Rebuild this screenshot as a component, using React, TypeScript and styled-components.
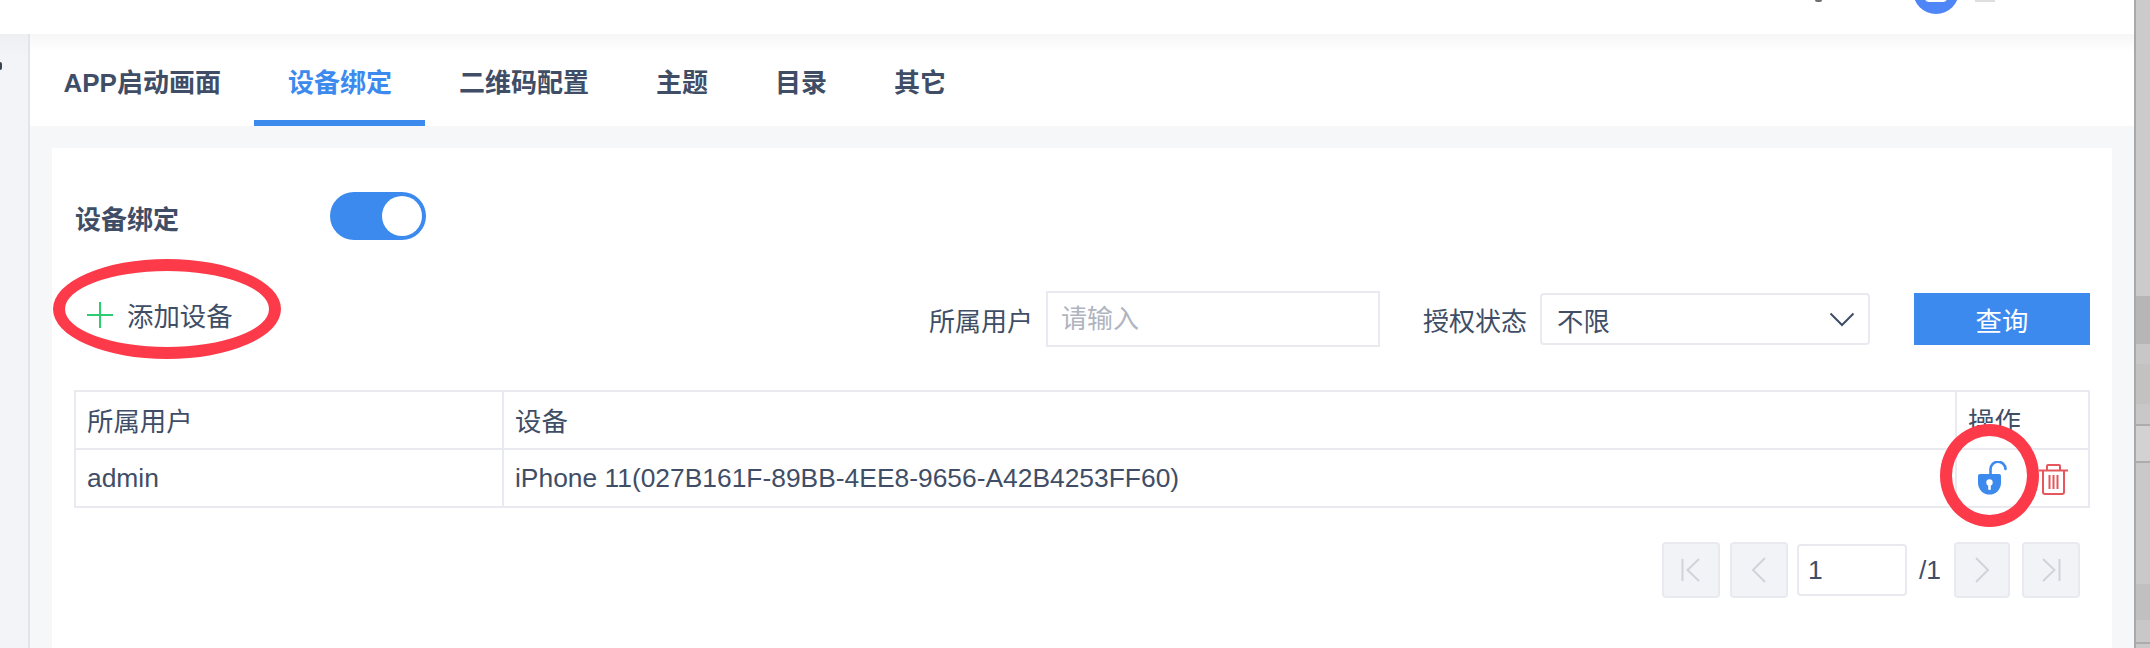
import styled, { createGlobalStyle } from 'styled-components';

const GlobalStyle = createGlobalStyle`
  html, body {
    margin: 0;
    padding: 0;
    background: #fff;
  }
  * {
    box-sizing: border-box;
  }
`;

const Page = styled.div`
  display: flex;
  width: 2150px;
  height: 648px;
  overflow: hidden;
  font-family: "Liberation Sans", "Noto Sans CJK SC", sans-serif;
  font-size: 26.4px;
  color: #3f4e66;
`;

const Main = styled.div`
  display: flex;
  flex-direction: column;
  width: 2134px;
`;

const Header = styled.header`
  display: flex;
  justify-content: flex-end;
  align-items: flex-start;
  flex: none;
  height: 34px;
  padding-right: 139px;
  background: #fff;
  overflow: hidden;
`;

const HeaderIconTip = styled.span`
  width: 7px;
  height: 2px;
  margin-right: 91px;
  border-radius: 0 0 4px 4px;
  background: #6f6f6f;
`;

const Avatar = styled.span`
  display: flex;
  justify-content: center;
  align-items: flex-end;
  width: 46px;
  height: 46px;
  margin-top: -32px;
  padding-bottom: 12px;
  border-radius: 50%;
  background: #4f86f7;

  &::before {
    content: '';
    width: 22px;
    height: 8px;
    border-radius: 0 0 4px 4px;
    background: #fff;
  }
`;

const HeaderNameTip = styled.span`
  width: 20px;
  height: 2px;
  margin-left: 16px;
  background: #dedede;
`;

const Body = styled.div`
  display: flex;
  flex: 1;
  min-height: 0;
`;

const Sidebar = styled.aside`
  flex: none;
  width: 30px;
  padding-top: 28px;
  border-right: 2px solid #e2e4eb;
  background: linear-gradient(to bottom, #eeeff2, #f2f4f8 24px);
`;

const SidebarGlyph = styled.span`
  display: block;
  width: 2px;
  height: 8px;
  border-radius: 0 2px 2px 0;
  background: #3a4350;
`;

const Content = styled.div`
  display: flex;
  flex-direction: column;
  flex: 1;
  min-width: 0;
`;

const Tabs = styled.nav`
  display: flex;
  flex: none;
  height: 92px;
  background: linear-gradient(to bottom, #f6f6f6, #fff 18px);
`;

const Tab = styled.div<{ $active?: boolean }>`
  display: flex;
  align-items: center;
  height: 100%;
  padding: 6px 33.5px 0;
  border-bottom: 6px solid ${(p) => (p.$active ? '#3d8aef' : 'transparent')};
  color: ${(p) => (p.$active ? '#3d8aef' : '#3f4e66')};
  font-size: 26px;
  font-weight: 700;
`;

const ContentArea = styled.main`
  flex: 1;
  min-height: 0;
  padding: 22px 22px 0;
  background: #f6f7f9;
`;

const Panel = styled.section`
  height: 100%;
  padding: 44px 22px 0;
  background: #fff;
`;

const SwitchRow = styled.div`
  display: flex;
  align-items: center;
  height: 48px;
`;

const SwitchLabel = styled.span`
  width: 256px;
  padding: 3px 0 0 1px;
  font-size: 26px;
  font-weight: 700;
`;

const Switch = styled.span`
  display: flex;
  justify-content: flex-end;
  align-items: center;
  width: 96px;
  height: 48px;
  padding-right: 4px;
  border-radius: 24px;
  background: #3d8aef;

  &::after {
    content: '';
    width: 40px;
    height: 40px;
    border-radius: 50%;
    background: #fff;
  }
`;

const Toolbar = styled.div`
  display: flex;
  align-items: center;
  height: 56px;
  margin-top: 51px;
`;

const AddButton = styled.div`
  position: relative;
  display: flex;
  align-items: center;
  gap: 14px;
  margin-left: 13px;
  margin-top: -9px;
`;

const AddMark = styled.svg`
  display: block;
  width: 26px;
  height: 26px;
`;

const AddEllipse = styled.span`
  position: absolute;
  left: -34px;
  top: -36px;
  width: 228px;
  height: 100px;
  border: 12px solid #fc3a4a;
  border-radius: 50%;
`;

const Filters = styled.div`
  display: flex;
  align-items: center;
  margin-left: auto;
`;

const FilterLabel = styled.label`
  margin-right: 13px;
  font-size: 26px;
`;

const TextInput = styled.input`
  width: 334px;
  height: 56px;
  margin-right: 43px;
  padding: 0 13px;
  border: 2px solid #e9eaf0;
  border-radius: 0;
  outline: none;
  font: inherit;
  font-size: 26px;
  color: inherit;

  &::placeholder {
    color: #b0b4bf;
  }
`;

const SelectBox = styled.div`
  display: flex;
  justify-content: space-between;
  align-items: center;
  width: 330px;
  height: 52px;
  padding: 0 13px 0 15px;
  border: 2px solid #e9eaf0;
  border-radius: 4px;
`;

const Chevron = styled.svg`
  display: block;
  width: 26px;
  height: 15px;
`;

const QueryButton = styled.button`
  width: 176px;
  height: 52px;
  margin-left: 44px;
  padding: 0;
  border: 0;
  background: #3d8aef;
  color: #fff;
  font: inherit;
`;

const Table = styled.table`
  width: 100%;
  margin-top: 43px;
  border-collapse: collapse;
  table-layout: fixed;
`;

const Cell = styled.td`
  height: 58px;
  padding: 0 11px;
  border: 2px solid #e9eaf0;
  font-weight: 400;
  text-align: left;
`;

const HeadCell = styled(Cell).attrs({ as: 'th' })`
  padding-bottom: 2px;
`;

const ActionCell = styled(Cell)`
  position: relative;
  padding: 0;
`;

const Actions = styled.div`
  display: flex;
  align-items: flex-start;
  gap: 31px;
  height: 34px;
  margin-left: 21px;
`;

const LockIcon = styled.svg`
  display: block;
  width: 30px;
  height: 34px;
`;

const TrashIcon = styled.svg`
  display: block;
  width: 29px;
  height: 31px;
  margin-top: 3px;
`;

const ActionCircle = styled.span`
  position: absolute;
  left: -17px;
  top: -26px;
  width: 99px;
  height: 103px;
  border: 12px solid #fc3a4a;
  border-radius: 50%;
`;

const Pager = styled.div`
  display: flex;
  align-items: center;
  justify-content: flex-end;
  margin-top: 34px;
  padding-right: 10px;
`;

const PagerButton = styled.span<{ $gap?: number; $w?: number }>`
  display: flex;
  justify-content: center;
  align-items: center;
  width: ${(p) => p.$w ?? 58}px;
  height: 56px;
  margin-left: ${(p) => p.$gap ?? 10}px;
  border: 2px solid #e9eaf0;
  border-radius: 4px;
  background: #f1f3f7;
`;

const PagerIcon = styled.svg`
  display: block;
  width: 26px;
  height: 26px;
  fill: none;
  stroke: #d0d3da;
  stroke-width: 2;
`;

const PageInput = styled.input`
  width: 110px;
  height: 52px;
  margin-left: 9px;
  padding: 0 9px;
  border: 2px solid #e9eaf0;
  border-radius: 4px;
  outline: none;
  font: inherit;
  color: inherit;
`;

const PageTotal = styled.span`
  margin-left: 12px;
`;

const BackdropStrip = styled.div`
  display: flex;
  flex-direction: column;
  flex: none;
  width: 16px;
  border-left: 2px solid #a9a9a9;
`;

const Band = styled.div<{ $h: number; $c: string; $line?: boolean }>`
  flex: none;
  height: ${(p) => p.$h}px;
  background: ${(p) => p.$c};
  border-bottom: ${(p) => (p.$line ? '2px solid #acacac' : '0')};
`;

const bands = [
  { h: 296, c: '#cbcbcb' },
  { h: 48, c: '#b6b6b6' },
  { h: 20, c: '#c7c7c7' },
  { h: 40, c: '#c2c2c0' },
  { h: 22, c: '#c8c8c8', line: true },
  { h: 37, c: '#d2d2d2', line: true },
  { h: 121, c: '#c9c9c9' },
  { h: 36, c: '#c0c0c0' },
  { h: 24, c: '#c8c8c8', line: true },
  { h: 4, c: '#c9c9c9' },
];

const tabs = ['APP启动画面', '设备绑定', '二维码配置', '主题', '目录', '其它'];

export default function App() {
  return (
    <Page>
      <GlobalStyle />
      <Main>
        <Header>
          <HeaderIconTip />
          <Avatar />
          <HeaderNameTip />
        </Header>
        <Body>
          <Sidebar>
            <SidebarGlyph />
          </Sidebar>
          <Content>
            <Tabs>
              {tabs.map((t) => (
                <Tab key={t} $active={t === '设备绑定'}>
                  {t}
                </Tab>
              ))}
            </Tabs>
            <ContentArea>
              <Panel>
                <SwitchRow>
                  <SwitchLabel>设备绑定</SwitchLabel>
                  <Switch />
                </SwitchRow>
                <Toolbar>
                  <AddButton>
                    <AddEllipse />
                    <AddMark viewBox="0 0 26 26">
                      <path d="M13 0v26M0 13h26" stroke="#2ecc71" strokeWidth="2" fill="none" />
                    </AddMark>
                    添加设备
                  </AddButton>
                  <Filters>
                    <FilterLabel>所属用户</FilterLabel>
                    <TextInput placeholder="请输入" />
                    <FilterLabel>授权状态</FilterLabel>
                    <SelectBox>
                      不限
                      <Chevron viewBox="0 0 26 15">
                        <path d="M1.5 1.5 13 13 24.5 1.5" stroke="#3f4e66" strokeWidth="2" fill="none" />
                      </Chevron>
                    </SelectBox>
                    <QueryButton>查询</QueryButton>
                  </Filters>
                </Toolbar>
                <Table>
                  <colgroup>
                    <col style={{ width: 428 }} />
                    <col />
                    <col style={{ width: 133 }} />
                  </colgroup>
                  <thead>
                    <tr>
                      <HeadCell>所属用户</HeadCell>
                      <HeadCell>设备</HeadCell>
                      <HeadCell>操作</HeadCell>
                    </tr>
                  </thead>
                  <tbody>
                    <tr>
                      <Cell>admin</Cell>
                      <Cell>iPhone 11(027B161F-89BB-4EE8-9656-A42B4253FF60)</Cell>
                      <ActionCell>
                        <Actions>
                          <LockIcon viewBox="0 0 30 34">
                            <path d="M12.5 14V8.5a7.5 7.5 0 0 1 15-.5" stroke="#3d8aef" strokeWidth="2.6" fill="none" strokeLinecap="round" />
                            <path d="M2 13h19a2 2 0 0 1 2 2v7a11 11 0 0 1-23 0v-7a2 2 0 0 1 2-2z" fill="#3d8aef" />
                            <circle cx="11.5" cy="21.5" r="3.2" fill="#fff" />
                            <rect x="10.2" y="22" width="2.6" height="7" rx="1" fill="#fff" />
                          </LockIcon>
                          <TrashIcon viewBox="0 0 29 31" fill="none" stroke="#e5575c" strokeWidth="2">
                            <path d="M0 6.5h29M8 6V2a1 1 0 0 1 1-1h11a1 1 0 0 1 1 1v4" />
                            <path d="M4 7v21a2 2 0 0 0 2 2h17a2 2 0 0 0 2-2V7" />
                            <path d="M10.5 11v14M14.5 11v14M18.5 11v14" />
                          </TrashIcon>
                        </Actions>
                        <ActionCircle />
                      </ActionCell>
                    </tr>
                  </tbody>
                </Table>
                <Pager>
                  <PagerButton>
                    <PagerIcon viewBox="0 0 26 26">
                      <path d="M4.5 2v22M21 2 9.5 13 21 24" />
                    </PagerIcon>
                  </PagerButton>
                  <PagerButton>
                    <PagerIcon viewBox="0 0 26 26">
                      <path d="M19 1 7 13l12 12" />
                    </PagerIcon>
                  </PagerButton>
                  <PageInput defaultValue="1" />
                  <PageTotal>/1</PageTotal>
                  <PagerButton $gap={13} $w={56}>
                    <PagerIcon viewBox="0 0 26 26">
                      <path d="M7 1l12 12L7 25" />
                    </PagerIcon>
                  </PagerButton>
                  <PagerButton $gap={12}>
                    <PagerIcon viewBox="0 0 26 26">
                      <path d="M21.5 2v22M5 2l11.5 11L5 24" />
                    </PagerIcon>
                  </PagerButton>
                </Pager>
              </Panel>
            </ContentArea>
          </Content>
        </Body>
      </Main>
      <BackdropStrip>
        {bands.map((b, i) => (
          <Band key={i} $h={b.h} $c={b.c} $line={b.line} />
        ))}
      </BackdropStrip>
    </Page>
  );
}
